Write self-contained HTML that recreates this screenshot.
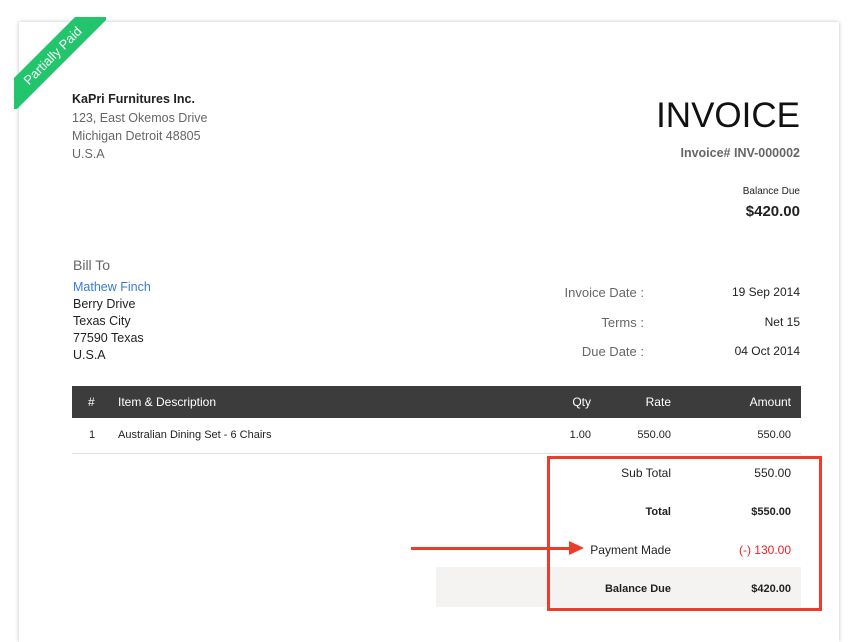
<!DOCTYPE html>
<html><head><style>
body{margin:0;width:854px;height:628px;background:#fff;font-family:"Liberation Sans",sans-serif;position:relative;overflow:hidden;color:#333}
.card{position:absolute;left:19px;top:22px;width:820px;height:620px;background:#fff;box-shadow:0 0 4px rgba(0,0,0,.25)}
.a{position:absolute;white-space:nowrap}
.r{text-align:right}
.g{color:#666}
</style></head><body>
<div class="card"></div>
<div style="position:absolute;left:14px;top:17px;width:92px;height:92px;overflow:hidden">
<div style="position:absolute;left:-31px;top:27px;width:140px;height:24px;background:#22c56b;transform:rotate(-45deg);color:#fff;font-size:13px;text-align:center;line-height:24px">Partially Paid</div>
</div>
<div class="a" style="left:72px;top:92px;font-size:12.5px;font-weight:bold;color:#222">KaPri Furnitures Inc.</div>
<div class="a g" style="left:72px;top:109px;font-size:12.5px;line-height:18px">123, East Okemos Drive<br>Michigan Detroit 48805<br>U.S.A</div>
<div class="a r" style="right:54px;top:96px;font-size:35px;color:#111">INVOICE</div>
<div class="a r g" style="right:54px;top:146px;font-size:12.5px;font-weight:bold">Invoice# INV-000002</div>
<div class="a r" style="right:54px;top:186px;font-size:10px;color:#222">Balance Due</div>
<div class="a r" style="right:54px;top:203px;font-size:15px;font-weight:bold;color:#222">$420.00</div>
<div class="a g" style="left:73px;top:257px;font-size:14px">Bill To</div>
<div class="a" style="left:73px;top:279px;font-size:12.5px;line-height:17px;color:#222"><span style="color:#3a7bd5">Mathew Finch</span><br>Berry Drive<br>Texas City<br>77590 Texas<br>U.S.A</div>
<div class="a r g" style="right:210px;top:278px;font-size:13px;line-height:29.5px">Invoice Date :<br>Terms :<br>Due Date :</div>
<div class="a r" style="right:54px;top:278px;font-size:12px;line-height:29.5px;color:#222">19 Sep 2014<br>Net 15<br>04 Oct 2014</div>
<div class="a" style="left:72px;top:386px;width:729px;height:32px;background:#3c3c3c;color:#fff;font-size:12px;line-height:32px">
<span class="a" style="left:16px">#</span><span class="a" style="left:46px">Item &amp; Description</span><span class="a r" style="right:210px">Qty</span><span class="a r" style="right:130px">Rate</span><span class="a r" style="right:10px">Amount</span></div>
<div class="a" style="left:72px;top:418px;width:729px;height:35px;border-bottom:1px solid #ddd;font-size:11px;line-height:34px;color:#222">
<span class="a" style="left:17px">1</span><span class="a" style="left:46px">Australian Dining Set - 6 Chairs</span><span class="a r" style="right:210px">1.00</span><span class="a r" style="right:130px">550.00</span><span class="a r" style="right:10px">550.00</span></div>
<div class="a" style="left:436px;top:567px;width:365px;height:40px;background:#f4f3f2"></div>
<div class="a r" style="right:183px;top:454px;font-size:12px;line-height:38px;color:#222">Sub Total<br><b style="font-size:11px">Total</b><br>Payment Made<br><b style="font-size:11px">Balance Due</b></div>
<div class="a r" style="right:63px;top:454px;font-size:12px;line-height:38px;color:#222">550.00<br><b style="font-size:11px">$550.00</b><br><span style="color:#f02020">(-) 130.00</span><br><b style="font-size:11px">$420.00</b></div>
<div class="a" style="left:547px;top:456px;width:269px;height:149px;border:3px solid #f03a2a"></div>
<div class="a" style="left:411px;top:547px;width:160px;height:3px;background:#f03a2a"></div>
<div class="a" style="left:569px;top:541px;width:0;height:0;border-left:15px solid #f03a2a;border-top:7px solid transparent;border-bottom:7px solid transparent"></div>
</body></html>
